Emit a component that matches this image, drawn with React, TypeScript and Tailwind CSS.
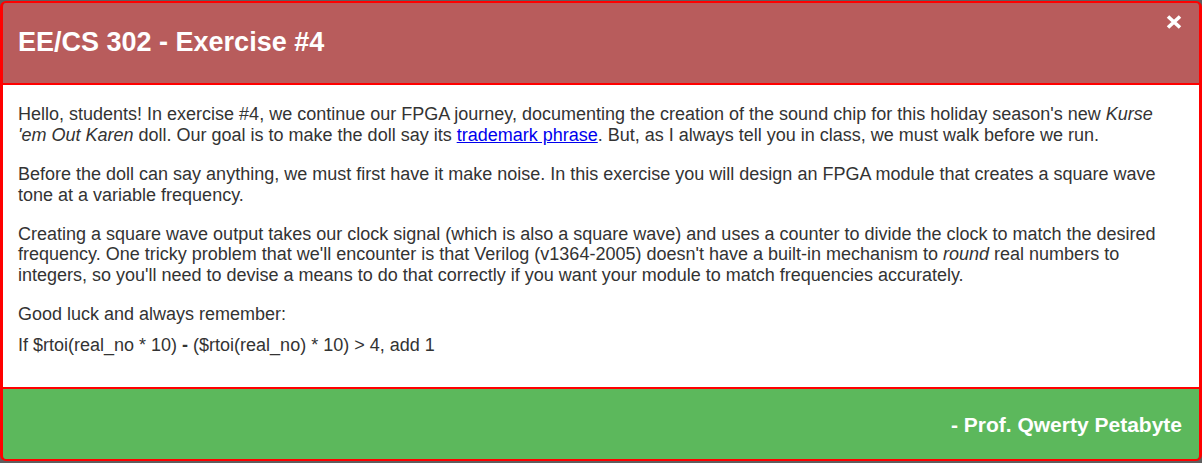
export default function App() {
    return (
        <div
            className="w-[1202px] h-[463px] bg-[#5e5e5e] pt-px"
            style={{ fontFamily: '"Liberation Sans", Arial, sans-serif' }}
        >
            <div className="h-[460px] flex flex-col border-x-[3px] border-y-2 border-[#ff0000] rounded-md overflow-hidden">
                <div className="h-[82px] shrink-0 flex justify-between bg-[#b85c5c] border-b-2 border-[#ff0000] pl-[15px] pr-[17px]">
                    <h1 className="self-center mt-[-2px] text-[27px] leading-none font-bold text-white">
                        EE/CS 302 - Exercise #4
                    </h1>
                    <button className="self-start mt-[12px] text-white" aria-label="Close">
                        <svg width="16" height="14" viewBox="0 0 16 14">
                            <path d="M2 1.5 L14 12.5 M14 1.5 L2 12.5" stroke="white" strokeWidth="3.6" />
                        </svg>
                    </button>
                </div>
                <div className="flex-1 bg-white pl-[15px] pr-[15px] pt-[19px] text-[18px] leading-[1.15] text-[#333]">
                    <p className="mb-[18.5px]">
                        Hello, students! In exercise #4, we continue our FPGA journey, documenting the creation of the sound chip for this holiday season's new <em>Kurse 'em Out Karen</em> doll. Our goal is to make the doll say its{' '}
                        <a href="#" className="text-[#0000ee] underline">trademark phrase</a>. But, as I always tell you in class, we must walk before we run.
                    </p>
                    <p className="mb-[18.5px]">
                        Before the doll can say anything, we must first have it make noise. In this exercise you will design an FPGA module that creates a square wave tone at a variable frequency.
                    </p>
                    <p className="mb-[18.5px]">
                        Creating a square wave output takes our clock signal (which is also a square wave) and uses a counter to divide the clock to match the desired frequency. One tricky problem that we'll encounter is that Verilog (v1364-2005) doesn't have a built-in mechanism to <em>round</em> real numbers to integers, so you'll need to devise a means to do that correctly if you want your module to match frequencies accurately.
                    </p>
                    <p className="mb-[10px]">Good luck and always remember:</p>
                    <p>
                        If $rtoi(real_no * 10) <b>-</b> ($rtoi(real_no) * 10) &gt; 4, add 1
                    </p>
                </div>
                <div className="h-[72px] shrink-0 flex items-center justify-end bg-[#5cb85c] border-t-2 border-[#ff0000] pr-[17px]">
                    <span className="text-[21px] leading-none font-bold text-white">- Prof. Qwerty Petabyte</span>
                </div>
            </div>
        </div>
    );
}
